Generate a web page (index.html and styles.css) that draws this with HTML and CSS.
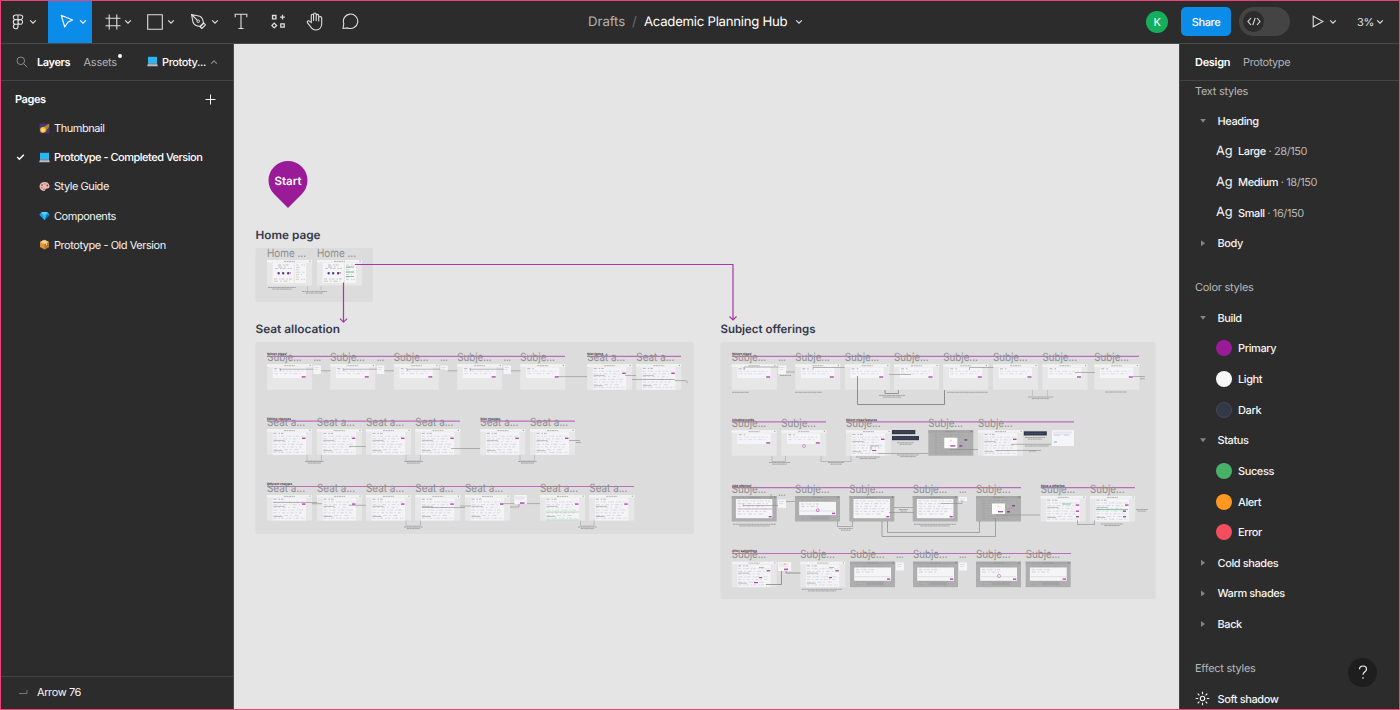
FILE: index.html
```html
<!DOCTYPE html>
<html lang="en">
<head>
<meta charset="utf-8">
<title>Academic Planning Hub</title>
<link rel="stylesheet" href="styles.css">
</head>
<body>
<svg class="defs" width="0" height="0">
  <symbol id="chev" viewBox="0 0 8 6"><path d="M1.2 1.4 4 4.2 6.8 1.4" fill="none" stroke="currentColor" stroke-width="1.2"/></symbol>
  <symbol id="laptop" viewBox="0 0 11 11"><path d="M1 .8h9v6.6H1z" fill="#29b6f6"/><path d="M1 7.4h9l.8 2.8H.2z" fill="#b9bec2"/><path d="M1.6 8.2h7.8" stroke="#84898d" stroke-width=".7"/></symbol>
</svg>
<div class="app">
  <header class="topbar">
    <div class="tools">
      <div class="tool menu">
        <svg width="12" height="16" viewBox="0 0 12 16"><path d="M6 1H3.6a2.3 2.3 0 0 0 0 4.6H6zM6 1h2.4a2.3 2.3 0 0 1 0 4.6H6zM6 5.6H3.6a2.3 2.3 0 0 0 0 4.6H6zM3.6 10.2A2.3 2.3 0 1 0 6 12.5v-2.3zM8.3 5.6a2.3 2.3 0 1 1 0 4.6 2.3 2.3 0 0 1 0-4.6z" fill="none" stroke="currentColor" stroke-width="1.1"/></svg>
        <svg class="chev" width="8" height="6"><use href="#chev"/></svg>
      </div>
      <div class="tool move">
        <svg width="14" height="15" viewBox="0 0 14 15"><path d="M1.2 1.2 12.6 6 7.8 8.2 4.7 13z" fill="none" stroke="currentColor" stroke-width="1.1" stroke-linejoin="round"/></svg>
        <svg class="chev" width="8" height="6"><use href="#chev"/></svg>
      </div>
      <div class="tool frame">
        <svg width="16" height="16" viewBox="0 0 16 16"><path d="M4.2.5v15M11.8.5v15M.5 4.2h15M.5 11.8h15" stroke="currentColor" stroke-width="1.1"/></svg>
        <svg class="chev" width="8" height="6"><use href="#chev"/></svg>
      </div>
      <div class="tool rect">
        <svg width="16" height="16" viewBox="0 0 16 16"><path d="M.7.7h14.6v14.6H.7z" fill="none" stroke="currentColor" stroke-width="1.1"/></svg>
        <svg class="chev" width="8" height="6"><use href="#chev"/></svg>
      </div>
      <div class="tool pen">
        <svg width="17" height="17" viewBox="0 0 17 17"><path d="M1.500 1.500 9.800 3.200C12.500 4.500 13.200 7 13.400 9.900L9.900 13.400C7 13.200 4.500 12.500 3.200 9.800zM1.500 1.500 7.200 7.200M10.200 13.900 13.900 10.200 15.500 11.800 11.800 15.500z" fill="none" stroke="currentColor" stroke-width="1.1" stroke-linejoin="round"/><circle cx="8.200" cy="8.200" r="1.300" fill="none" stroke="currentColor"/></svg>
        <svg class="chev" width="8" height="6"><use href="#chev"/></svg>
      </div>
      <svg class="solo text" width="14" height="17" viewBox="0 0 14 17"><path d="M1.2 4.2V1.2h11.6v3M7 1.2v14.3M4.5 15.5h5" fill="none" stroke="currentColor" stroke-width="1.1"/></svg>
      <svg class="solo comp" width="15" height="15" viewBox="0 0 15 15"><path d="M1.5 1.5h3.4v3.4H1.5zM9.8 9.8h3.4v3.4H9.8zM3.2 9.1l2.4 2.4-2.4 2.4L.8 11.5zM11.5 .8v4.8M9.1 3.2h4.8" fill="none" stroke="currentColor" stroke-width="1.3"/></svg>
      <svg class="solo hand" width="18" height="19" viewBox="0 0 18 19"><path d="M5.3 10.5V3.6c0-1.8 2.3-1.8 2.3 0V2.4c0-1.9 2.6-1.9 2.6 0v1.2c0-1.8 2.5-1.6 2.5.2v2c0-1.6 3-1.6 3 .3v5.5c0 3.6-2.2 6.4-5.8 6.4-3 0-4.500-1.500-5.600-3.700L1.400 10.700c-.8-1.600 1.200-2.600 2.300-1.300zM7.600 3.600v5M10.200 3.400v5.200M12.700 4v5" fill="none" stroke="currentColor" stroke-width="1.1" stroke-linecap="round"/></svg>
      <svg class="solo comment" width="17" height="17" viewBox="0 0 17 17"><path d="M1 15.500 1.800 10.700A7.200 7.200 0 1 1 5.800 14.900z" fill="none" stroke="currentColor" stroke-width="1.1" stroke-linejoin="round"/></svg>
    </div>
    <div class="title"><span class="folder">Drafts</span><span class="slash">/</span><span class="file">Academic Planning Hub</span><svg class="chev" width="8" height="6"><use href="#chev"/></svg></div>
    <div class="actions">
      <div class="avatar">K</div>
      <div class="share">Share</div>
      <div class="toggle"><div class="knob"><svg width="14" height="9" viewBox="0 0 14 9"><path d="M4 1 1 4.500 4 8M10 1l3 3.500L10 8M8.200.8 5.800 8.200" fill="none" stroke="currentColor" stroke-width="1.1"/></svg></div></div>
      <svg class="play" width="12" height="13" viewBox="0 0 12 13"><path d="M1.200 1.200 11 6.500 1.200 11.800z" fill="none" stroke="currentColor" stroke-width="1.1"/></svg>
      <svg class="chev playchev" width="8" height="6"><use href="#chev"/></svg>
      <span class="zoom">3%</span>
      <svg class="chev" width="8" height="6"><use href="#chev"/></svg>
    </div>
  </header>
  <div class="body">
    <aside class="left">
      <div class="tabs">
        <svg class="search" width="12" height="12" viewBox="0 0 12 12"><circle cx="4.800" cy="4.800" r="3.800" fill="none" stroke="currentColor"/><path d="m7.600 7.600 3.600 3.600" stroke="currentColor"/></svg>
        <b class="layers">Layers</b><span class="assets">Assets<i class="dot"></i></span>
        <span class="current"><svg width="11" height="11"><use href="#laptop"/></svg>Prototy...</span>
        <svg class="up" width="8" height="6"><use href="#chev"/></svg>
      </div>
      <div class="pages-head"><b>Pages</b><svg width="11" height="11" viewBox="0 0 11 11"><path d="M5.500.5v10M.5 5.500h10" stroke="currentColor"/></svg></div>
      <div class="page"><i class="check"></i><svg width="11" height="11" viewBox="0 0 11 11"><rect x=".5" y=".5" width="10" height="10" rx="1" fill="#4b3472"/><path d="M2.500 5 10.300.7 10 4 6.500 8.800z" fill="#a98438"/><circle cx="4" cy="6.800" r="2.900" fill="#fbc02d"/><path d="m4 4.800.6 1.400 1.500.2-1.200 1 .3 1.500L4 8.100l-1.300.8.3-1.500-1.100-1 1.500-.2z" fill="#ffe680"/></svg><span>Thumbnail</span></div>
      <div class="page active"><i class="check"><svg width="9" height="8" viewBox="0 0 9 8"><path d="m1.200 4 2.200 2.200L7.800 1.700" fill="none" stroke="#fff" stroke-width="1.500"/></svg></i><svg width="11" height="11"><use href="#laptop"/></svg><span>Prototype - Completed Version</span></div>
      <div class="page"><i class="check"></i><svg width="11" height="11" viewBox="0 0 11 11"><path d="M5.500 1C2.500 1 .5 3 .5 5.600S2.600 10 5 10c1.600 0 1-1.800 2-2.300 1.200-.5 3.500.2 3.500-2.500S8 1 5.500 1z" fill="#f2b8ae"/><circle cx="3" cy="4" r="1" fill="#d84b65"/><circle cx="5.800" cy="2.800" r=".9" fill="#6f9aca"/><circle cx="8.300" cy="4.500" r=".9" fill="#7d4a40"/><circle cx="2.800" cy="6.700" r=".9" fill="#67a97a"/><circle cx="5" cy="8.300" r=".8" fill="#b1529d"/></svg><span>Style Guide</span></div>
      <div class="page"><i class="check"></i><svg width="11" height="11" viewBox="0 0 11 11"><path d="M2.500 2h6l2.200 2.700-5.200 5.500L.3 4.700z" fill="#1e9be8"/><path d="M2.500 2h6L7.500 4.700h-4z" fill="#5fd0fa"/><path d="M3.500 4.700h4l-2 5.500z" fill="#20c4f5"/><path d="M7.500 4.700h3.200l-5.200 5.500z" fill="#0b70c4"/></svg><span>Components</span></div>
      <div class="page"><i class="check"></i><svg width="11" height="11" viewBox="0 0 11 11"><path d="M5.500.7 10 3v5L5.500 10.500 1 8V3z" fill="#d9963c"/><path d="M5.500.7 10 3 5.500 5.300 1 3z" fill="#f3c37b"/><path d="M5.500 5.300V10.500L10 8V3z" fill="#b97728"/><path d="m3 1.900 4.500 2.400v1.800" fill="none" stroke="#fae2b0" stroke-width=".9"/></svg><span>Prototype - Old Version</span></div>
      <div class="selected-layer"><svg width="10" height="6" viewBox="0 0 10 6"><path d="M1 4.500h8V1" fill="none" stroke="#777"/></svg><span>Arrow 76</span></div>
    </aside>
    <main class="canvas"><svg id="board" width="945" height="665" viewBox="234 44 945 665"></svg></main>
    <aside class="right">
      <div class="rtabs"><b>Design</b><span>Prototype</span></div>
      <div class="styles">
        <div class="group first">Text styles</div>
        <div class="row folderrow open"><i class="tri"></i>Heading</div>
        <div class="row item"><i class="ag">Ag</i>Large<em> · 28/150</em></div>
        <div class="row item"><i class="ag">Ag</i>Medium<em> · 18/150</em></div>
        <div class="row item"><i class="ag">Ag</i>Small<em> · 16/150</em></div>
        <div class="row folderrow"><i class="tri"></i>Body</div>
        <div class="group">Color styles</div>
        <div class="row folderrow open"><i class="tri"></i>Build</div>
        <div class="row item"><i class="sw primary"></i>Primary</div>
        <div class="row item"><i class="sw light"></i>Light</div>
        <div class="row item"><i class="sw dark"></i>Dark</div>
        <div class="row folderrow open"><i class="tri"></i>Status</div>
        <div class="row item"><i class="sw success"></i>Sucess</div>
        <div class="row item"><i class="sw alert"></i>Alert</div>
        <div class="row item"><i class="sw error"></i>Error</div>
        <div class="row folderrow"><i class="tri"></i>Cold shades</div>
        <div class="row folderrow"><i class="tri"></i>Warm shades</div>
        <div class="row folderrow"><i class="tri"></i>Back</div>
        <div class="group">Effect styles</div>
        <div class="row effect"><svg width="15" height="15" viewBox="0 0 15 15"><circle cx="7.500" cy="7.500" r="2.200" fill="none" stroke="currentColor" stroke-width="1.100"/><path d="M7.500.7v2.500M7.500 11.800v2.500M.7 7.500h2.500M11.800 7.500h2.500M2.700 2.700l1.700 1.700M10.600 10.600l1.700 1.700M2.700 12.300l1.700-1.700M10.600 4.400l1.700-1.700" stroke="currentColor" stroke-width="1.100"/></svg>Soft shadow</div>
      </div>
      <div class="help"><svg width="10" height="15" viewBox="0 0 10 15"><path d="M1.500 4.300C1.500 2.300 3 1 5 1s3.500 1.300 3.500 3.200C8.500 6.800 5 6.800 5 9.800M5 12.200v1.600" fill="none" stroke="currentColor" stroke-width="1.200"/></svg></div>
    </aside>
  </div>
</div>
<script src="board.js"></script>
</body>
</html>
```
FILE: styles.css
```css
* { box-sizing: border-box; }
body { margin: 0; font-family: Inter, "Liberation Sans", sans-serif; font-size: 11px; letter-spacing: -.4px; text-rendering: geometricPrecision; color: #f4f4f4; overflow: hidden; }
i, em { font-style: normal; }
b { font-weight: 600; color: #fff; }
svg { display: block; flex: none; }
.defs { position: absolute; }
.app { width: 1400px; height: 710px; border: 1px solid #ee4378; background: #2c2c2c; display: flex; flex-direction: column; overflow: hidden; }
.topbar { height: 43px; flex: none; border-bottom: 1px solid #4a4a4a; display: grid; grid-template-columns: 586px 1fr 262px; color: #e0e0e0; }
.tools, .tool, .title, .actions { display: flex; align-items: center; }
.tools { color: #e0e0e0; }
.title, .actions { padding-bottom: 1px; }
.tool { height: 42px; padding-bottom: 1px; }
.menu { width: 47px; padding-left: 11px; gap: 5px; }
.move { width: 44px; padding-left: 12px; gap: 5px; background: #0c8ce9; color: #fff; }
.frame { padding-left: 13px; gap: 3px; }
.rect { padding-left: 15px; gap: 4px; }
.pen { padding-left: 15px; gap: 4px; }
.solo { margin-bottom: 1px; }
.solo.text { margin-left: 15px; }
.comp { margin-left: 23px; }
.hand { margin-left: 20px; }
.comment { margin-left: 18px; }
.title { font-size: 13.2px; letter-spacing: -.27px; padding-left: 1px; }
.folder { color: #b3b3b3; width: 38px; letter-spacing: -.05px; }
.slash { color: #6c6c6c; margin: 0 7px 0 6px; width: 5px; }
.file { color: #fff; white-space: nowrap; width: 143.500px; }
.title .chev { margin-left: 7px; }
.actions { padding-left: 9px; }
.avatar { width: 22px; height: 22px; border-radius: 50%; background: #14ae5c; color: #fff; display: grid; place-items: center; }
.share { width: 50px; height: 29px; margin-left: 13px; border-radius: 5px; background: #0c8ce9; color: #fff; display: grid; place-items: center; font-weight: 500; }
.toggle { width: 51px; height: 29px; margin-left: 8px; border-radius: 15px; background: #444; padding: 4px; }
.knob { width: 21px; height: 21px; border-radius: 50%; background: #2c2c2c; display: grid; place-items: center; }
.play { margin-left: 22px; }
.playchev { margin-left: 5px; }
.zoom { margin-left: 20px; width: 15px; margin-right: 4px; }
.body { flex: 1; min-height: 0; display: grid; grid-template-columns: 233px 945px 220px; }
.left, .right { display: flex; flex-direction: column; min-height: 0; }
.left { border-right: 1px solid #4a4a4a; }
.tabs { height: 37px; flex: none; border-bottom: 1px solid #444; display: flex; align-items: center; padding: 0 0 1px 15px; }
.search, .up { color: #8a8a8a; }
.layers { margin-left: 9px; width: 46.500px; }
.assets { color: #b3b3b3; position: relative; width: 63.500px; letter-spacing: -.25px; }
.dot { position: absolute; left: 34.500px; top: -1px; width: 4px; height: 4px; border-radius: 50%; background: #fff; }
.current { display: flex; gap: 4px; width: 62px; font-weight: 500; color: #fff; align-items: center; }
.up { transform: rotate(180deg); margin-left: 1px; }
.pages-head { height: 33px; margin-top: 1.500px; padding: 0 17.500px 0 14px; display: flex; justify-content: space-between; align-items: center; margin-bottom: -2px; }
.page { height: 29.200px; display: flex; align-items: center; padding-left: 15px; letter-spacing: -.45px; }
.check { width: 23px; }
.page > span { margin-left: 4px; white-space: nowrap; }
.active { font-weight: 500; color: #fff; letter-spacing: -.5px; }
.selected-layer { margin-top: auto; height: 33px; border-top: 1px solid #444; display: flex; align-items: center; padding: 0 0 3px 17px; gap: 9px; }
.canvas { background: #e5e5e5; overflow: hidden; letter-spacing: 0; }
.right { position: relative; border-left: 1px solid #444; overflow: hidden; }
.rtabs { height: 37px; flex: none; border-bottom: 1px solid #444; display: flex; align-items: center; padding: 0 0 1px 15px; }
.rtabs b { width: 48px; letter-spacing: -.3px; }
.rtabs span { color: #b3b3b3; }
.group { color: #b8b8b8; height: 43.900px; padding: 14.500px 0 0 15px; line-height: 29px; letter-spacing: -.27px; }
.group.first { height: 24.500px; padding-top: 0; line-height: 20.500px; }
.row { height: 30.630px; display: flex; align-items: center; white-space: pre; font-weight: 500; }
.folderrow { padding-left: 21px; }
.item { padding-left: 36px; }
.tri { width: 16.500px; }
.tri::before { content: ""; display: block; width: 4px; height: 6px; background: #858585; clip-path: polygon(0 0, 100% 50%, 0 100%); }
.open .tri::before { width: 6px; height: 4px; margin-left: -1px; clip-path: polygon(0 0, 100% 0, 50% 100%); }
.ag { font-size: 12.800px; letter-spacing: -.2px; width: 22px; font-weight: 400; }
.item em { color: #b8b8b8; font-weight: 400; }
.sw { width: 16px; height: 16px; border-radius: 50%; margin-right: 6px; }
.primary { background: #991b97; }
.light { background: #f8f8f8; }
.dark { background: #34394a; border: 1px solid #44485a; }
.success { background: #47b267; }
.alert { background: #ff9820; }
.error { background: #f24e5e; }
.effect { padding-left: 15px; gap: 7.500px; }
.help { position: absolute; right: 22px; bottom: 22px; width: 29px; height: 29px; border-radius: 50%; background: #1e1e1e; display: grid; place-items: center; }
#board .heading { font-weight: 600; font-size: 11.500px; fill: #34384b; }
#board .pin { font-weight: 600; font-size: 11.500px; fill: #fff; }
#board .label { font-size: 11.300px; fill: #8e8e8e; }
#board .tiny { font-weight: 700; font-size: 3px; fill: #333; }
```
FILE: board.js
```js
const out = [];
const rect = (x, y, w, h, fill, extra = '') => out.push(`<rect x="${x}" y="${y}" width="${w}" height="${h}" fill="${fill}" ${extra}/>`);
const path = (d, stroke = '#8a8a8a', w = 0.6, extra = '') => out.push(`<path d="${d}" fill="none" stroke="${stroke}" stroke-width="${w}" ${extra}/>`);
const text = (x, y, s, len, cls) => out.push(`<text x="${x}" y="${y}" class="${cls}" textLength="${len}" lengthAdjust="spacingAndGlyphs">${s}</text>`);
const note = (x, y, w, lines = 2) => {
  for (let i = 0; i < lines; i++) path(`M${x + i * w * 0.15} ${y + i * 1.6}h${w * (1 - i * 0.3)}`, '#8c8c8c', 0.7, 'stroke-dasharray="2.500 .4 1.500 .3"');
};
const P = '#b545b3';

// Draws one screen thumbnail, 45 x 25.5 units.
function screen(x, y, kind) {
  const dark = ['tall', 'short', 'popup'].includes(kind);
  rect(x, y, 45, 25.5, dark ? '#aeaeae' : '#e7e7e7');
  rect(x, y, 45, 2.5, dark ? '#a6a6a6' : '#f3f3f4');
  path(`M${x + 17} ${y + 1.4}h11`, '#8a8a8a', 0.6, 'stroke-dasharray="2 .5"');
  rect(x + 42.5, y + 0.6, 1.2, 1.2, dark ? '#777' : '#a5a5c0');
  const rows = (rx, ry, w, n, gap, color) => {
    for (let i = 0; i < n; i++) path(`M${rx} ${ry + i * gap}h${w - (i % 3) * 3}`, color, 0.6, `stroke-dasharray="${3 + i % 2} 2 1.500 ${1 + i % 3}"`);
  };
  if (kind === 'form') {
    rect(x + 5.7, y + 3.2, 33.3, 10.6, '#f5f5f8');
    rows(x + 7, y + 4.5, 7, 1, 2, '#888');
    rows(x + 7, y + 7, 30, 2, 2.4, '#ccccd6');
    rect(x + 34.5, y + 12, 4, 1.4, P);
  } else if (kind === 'doc') {
    rect(x + 5.7, y + 3, 33.3, 22.5, '#f4f4f7');
    rows(x + 6.5, y + 4.2, 10, 1, 2, '#888');
    rows(x + 6.5, y + 7, 31, 7, 2.7, '#c2c2cc');
    path(`M${x + 6.5} ${y + 11.4}h11M${x + 6.5} ${y + 21.5}h9`, '#888', 0.5);
    rect(x + 35, y + 8.4, 3.5, 1.4, P);
  } else if (kind === 'home') {
    rect(x + 5.7, y + 3, 21, 20, '#f5f5f8');
    rect(x + 28, y + 3, 11, 20, '#f5f5f8');
    rows(x + 11, y + 5, 12, 2, 2, '#999');
    rows(x + 8, y + 8.5, 17, 1, 2, '#aaa');
    [10.5, 15, 20].forEach(d => rect(x + d, y + 12, 2.3, 2.5, '#5d3d83', 'rx="1"'));
    rows(x + 7, y + 19, 19, 2, 2.2, '#aaa');
    rows(x + 29, y + 5, 9, 7, 2.4, '#bbb');
    rect(x + 22.5, y + 12.3, 1.3, 1.3, P);
  } else if (kind === 'tall') {
    rect(x + 4.2, y + 3, 36.5, 19.2, '#f5f5f8');
    rows(x + 6, y + 5, 33, 6, 2.6, '#bcbcc6');
    rect(x + 37, y + 20, 3, 1.4, P);
  } else {
    rows(x + 6, y + 4.5, 30, 8, 2.6, '#9c9c9c');
    if (kind === 'short') {
      rect(x + 4.2, y + 5.8, 36.8, 13.3, '#f5f5f8');
      rows(x + 6, y + 8, 20, 2, 2.4, '#bbb');
      path(`M${x + 5} ${y + 15}h35`, '#d4d4d4', 0.7);
      rect(x + 37, y + 16.7, 3.2, 1.4, P);
      rect(x + 16, y + 20.5, 18, 3, '#a2a2a2');
    } else {
      rect(x + 16, y + 7.5, 13, 10.5, '#fff');
      rect(x + 21.5, y + 9.5, 2, 1.6, '#ffd2a6');
      rect(x + 22, y + 15, 5, 1.4, P);
      rect(x + 36, y + 9, 3, 1.5, '#90458e');
      rect(x + 31, y + 15, 3, 1.5, '#90458e');
    }
  }
}
const row = (y, name, len, list) => list.forEach(([x, kind]) => {
  screen(x, y, kind);
  text(x, y - 3.3, name, len, 'label');
});
const bar = (x, x2, y, title, len) => {
  if (title) text(x, y - 1.1, title, len, 'tiny');
  path(`M${x} ${y}H${x2}`, '#bd6cbc', 1.2);
};
const mini = (x, y, w = 8, h = 8.5) => {
  rect(x, y, w, h, '#f5f5f8');
  path(`M${x + 1} ${y + 2}h${w - 3}M${x + 1} ${y + 4}h${w - 4}`, '#c5c5d0', 0.5);
};
const dots = (x, y) => text(x, y, '...', 7.5, 'label');

// Start pin and section panels
out.push('<path d="M288 208 L274.300 194.300 A19.500 19.500 0 1 1 301.700 194.300Z" fill="#991b97"/>');
text(274.5, 184.6, 'Start', 27, 'pin');
rect(255.5, 248, 117.5, 54, '#dcdcdc', 'rx="2"');
rect(255.5, 342, 438.5, 192, '#dcdcdc', 'rx="2"');
rect(720.5, 342, 435, 257, '#dcdcdc', 'rx="2"');
text(255.5, 239.2, 'Home page', 65, 'heading');
text(255.5, 333, 'Seat allocation', 84.5, 'heading');
text(720.5, 333, 'Subject offerings', 95, 'heading');

// Home page
[267, 317].forEach(x => { screen(x, 260, 'home'); text(x, 256.8, 'Home ...', 39, 'label'); });
path('M346 267h8M346 272h8M346 276.500h8', '#58b77b', 0.8);
note(268, 287.5, 28, 2);
note(302, 291.5, 25, 2);
path('M307.500 286v4.500M321 286v4.500', '#aaa', 0.5);

// Seat allocation
bar(267, 565, 356.4, 'Select class', 19);
bar(587, 681, 356.4, 'Seat listing', 16);
row(364.2, 'Subje...', 34.5, [267.2, 330.3, 393.8, 457.2, 520.3].map(x => [x, 'form']));
row(364.2, 'Seat a...', 38, [[587.2, 'doc'], [636.3, 'doc']]);
[313.4, 376.8, 440.3, 503.5].forEach((x, i) => {
  mini(x, 365.5, 7.5, i === 2 ? 4.5 : 8.5);
  dots(x, 360.5);
  path(`M${x - 33} 371v-1.800H${x}M${x + 7.5} 370.800h9.500`);
});
path('M559 376.600h28M625 375.500h11M632 379.500h43M675 380.600h11M687 380.600v2.500');
bar(267, 460, 421.2, 'Editing changes', 24);
bar(480.3, 575, 421.2, 'Seat changes', 20);
row(429.2, 'Seat a...', 38, [[267, 'doc'], [316.8, 'doc'], [366, 'doc'], [415.3, 'doc'], [480.3, 'doc'], [530, 'doc']]);
path('M349 446.500h17M451 448.500h29M569 440.500h11M576 442.500h5');
[[307, 305], [406, 404], [520, 518]].forEach(([x, n]) => { path(`M${x} 455v6h14.500v-6`, '#a5a5a5', 0.5); note(n, 461.5, 19); });
bar(267, 634, 486.5, 'Different changes', 25);
row(495, 'Seat a...', 38, [[267, 'doc'], [317, 'doc'], [366, 'doc'], [415.3, 'doc'], [465, 'doc'], [540, 'doc'], [589.3, 'doc']]);
path('M273 502.500h44M312 503.700h10M349 505.300h17M422 507.500h43M460 506h11M500 503.600h15M526 503.600h14M510 507h9v-3');
mini(514.3, 495, 12.5, 9);
rect(520, 502.3, 4.5, 1.5, P);
path('M406 520.500v5.500h14.500v-5.500M580.500 520.500v5.500H594v-5.500', '#999', 0.5);
note(404, 527, 19); note(578, 527, 19);
path('M546 512h33M546 520h33', '#6fc08c', 0.5);

// Subject offerings
bar(732, 1139, 356.4, 'Select class', 19);
row(364.3, 'Subje...', 34.5, [731.7, 795.3, 844.7, 894, 943.3, 993, 1042.5, 1094.3].map(x => [x, 'form']));
mini(778.3, 365.5); dots(778.3, 360.5);
path('M744 370v-3h34.500M786 372h9M813 370v-2.500h31.500M889 374.500h22M969.500 370v-2.500h24M1075 372.500h20M1133 376.500h12');
path('M857.500 376v28.500h87V390', '#777', 0.8);
path('M885 390v3.500h13.500V390', '#777', 0.7);
path('M1032.500 390v6M1047.500 390v6', '#aaa', 0.5);
note(732, 392.3, 17, 1); note(795, 392.3, 27, 1); note(947, 392.3, 41, 1); note(1105, 392, 22, 1); note(879, 395.5, 26); note(1028, 397, 25);
note(1140, 378.7, 5, 1); note(780, 375.5, 11, 1);

bar(732, 826, 421.8, 'Loading cards', 22);
bar(846, 1074, 421.8, 'Select class features', 31);
row(430.2, 'Subje...', 34.5, [[731.7, 'form'], [781.3, 'form'], [846, 'doc'], [928.3, 'popup'], [978, 'doc']]);
out.push('<circle cx="804" cy="446" r="1.500" fill="none" stroke="#c77ac5" stroke-width=".7"/>');
rect(892, 430, 23.3, 4.2, '#34384c'); rect(892, 436, 27, 4.2, '#34384c'); rect(1023.800, 431.3, 23, 4.2, '#34384c');
path('M894 432h19M894 438h22M1026 433.400h18', '#666b80', 0.5, 'stroke-dasharray="2 .6"');
note(897, 442.7, 17); note(897, 455, 22); note(1025, 437.5, 20); note(1025, 446, 24, 1); note(1029, 451, 7, 1);
mini(1052, 430.2, 22, 15.8);
rect(1054, 434, 6, 2, '#d2dfef'); rect(1064, 434, 5, 2, '#d2dfef'); rect(1054, 441, 3, 2, '#b6d5f2');
path('M878 453.500h50M871 450v-4h8M1011 444.300h40M996 450.500h45M950 449.500h28');
path('M772 456v5.500h13.500V456M821 456v5.500h30V456', '#999', 0.5);
note(769, 462.5, 21); note(828, 462.5, 16); note(856, 457, 24);
rect(872, 450, 4, 1, P);

bar(732, 1021, 487.7, 'Add offering', 19);
bar(1040.7, 1135, 487.7, 'Save a offering', 24);
row(496, 'Subje...', 34.5, [[731.7, 'tall'], [795, 'short'], [849.3, 'tall'], [912.7, 'tall'], [976, 'popup'], [1040.7, 'doc'], [1090, 'doc']]);
mini(778, 499.5); mini(959, 497, 8, 4); dots(778, 496); dots(959, 492.5);
out.push('<rect x="816.500" y="509" width="2.500" height="2.500" rx=".8" fill="none" stroke="#b54db3" stroke-width=".7"/>');
path('M743 503v2.500h35M771 499v-5M786 501.500h9M894 507.500h19M889 512.500h25M941 503.500h21v-3M996 515h44');
path('M882 521v15.500h113.500V518M887.500 521v11.500h92V521', '#888', 0.7);
path('M837.500 521v5.500h15V521M1077.500 520v4.500h17v-4', '#888', 0.6);
note(733, 524.3, 43); note(839, 528.5, 14); note(899, 509.5, 9); note(914, 524.3, 42); note(1101, 524, 22); note(1136, 509.500, 12);
path('M738 509h35', '#d49bd4', 0.7);
path('M1062 504h9M1096 509.500h32', '#63c18b', 0.8);
rect(1076, 510.5, 3, 1.4, P); rect(1123, 510.5, 3, 1.4, P); rect(1076, 516, 3, 1.4, P); rect(1123, 516, 3, 1.4, P);

bar(732, 1071, 553.5, 'After submitting', 25);
row(561.7, 'Subje...', 34.5, [[731.7, 'doc'], [800.3, 'doc'], [850, 'short'], [913, 'short'], [976, 'short'], [1025.7, 'short']]);
mini(778, 562, 13, 9); rect(784, 568.600, 4, 1.500, P); rect(784, 563.500, 1.800, 1.200, '#ffb36b');
mini(896, 562.5, 8, 8); mini(959, 562.5, 8, 8); dots(896, 558); dots(959, 558);
path('M766 584.500h15.500V571M786 571v2h14.500', '#777', 0.7);
rect(759, 577, 3, 1.2, P); rect(754, 582, 4, 1.200, P); rect(829, 577, 3, 1.200, P);
path('M759 567.500h5M829 567.500h5', '#63c18b', 0.7);
note(802, 589.3, 40);
out.push('<circle cx="999" cy="576" r="1.600" fill="none" stroke="#b980bd" stroke-width=".7"/>');

// Flow arrows between sections
path('M355 264.500H733V320M729.500 316.500 733 320 736.500 316.500M343.500 282.500V322M340 318.700 343.500 322.200 347 318.700', '#a936a6', 1.2);

document.getElementById('board').innerHTML = out.join('');
```
